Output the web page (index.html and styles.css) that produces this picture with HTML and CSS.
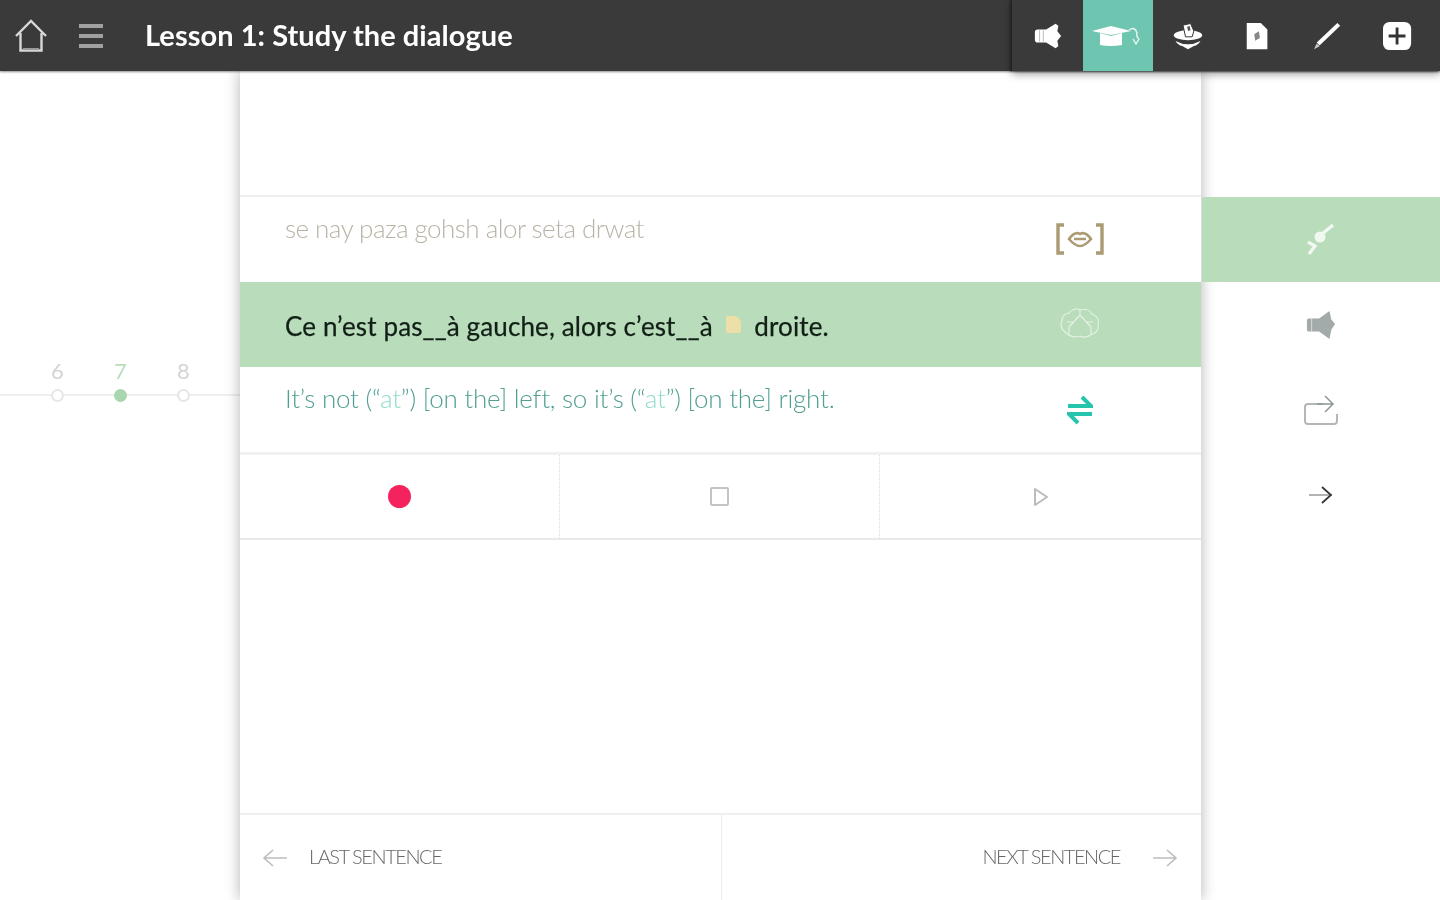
FILE: index.html
```html
<!DOCTYPE html>
<html lang="en">
<head>
<meta charset="utf-8">
<title>Lesson 1: Study the dialogue</title>
<link rel="stylesheet" href="styles.css">
</head>
<body>
<header class="topbar">
  <div class="topbar-left">
    <svg class="home-icon" viewBox="0 0 34 36"><path d="M2 18 L17 3 L32 18 M6.5 15 V32.5 H27.5 V15" fill="none" stroke="#d8d8d8" stroke-width="2.4"/><path d="M9 31 H25" stroke="#9a9a9a" stroke-width="2"/></svg>
    <div class="burger"><span></span><span></span><span></span></div>
    <h1 class="title">Lesson 1: Study the dialogue</h1>
  </div>
  <nav class="tools">
    <div class="tool"><svg class="ico" viewBox="0 0 32 32"><path d="M2 12 Q2 9 5 9 H14 L24 3 L27 5 L26 11 L30 16 L26 21 L27 27 L24 29 L14 23 H5 Q2 23 2 20 Z" fill="#fff"/><path d="M7 10 V22 M11 10 V22" stroke="#9a9a9a" stroke-width=".7"/></svg></div>
    <div class="tool tool-active"><svg class="ico-wide" viewBox="0 0 54 32"><path d="M1 11 L20 6 L40 11 L20 15 Z" fill="#fff"/><path d="M9 13 L20 16 L31 13 V25 Q20 27 9 25 Z" fill="#fff"/><path d="M38 10 Q44 6 46 13 Q45 17 48 19 L45 24 L42 19" fill="none" stroke="#eaf7f3" stroke-width="1.4"/></svg></div>
    <div class="tool"><svg class="ico" viewBox="0 0 36 32"><ellipse cx="18" cy="15" rx="17" ry="6" fill="#fff"/><path d="M12 3 L21 1 L25 10 L23 17 H15 Z" fill="#fff" stroke="#3a3a3a" stroke-width="1.2"/><path d="M17 5 L20 4 L21 9 L18 10 Z" fill="#555"/><path d="M3 22 Q18 30 33 22 Q30 27 25 28 L18 32 L11 28 Q6 27 3 22 Z" fill="#fff"/></svg></div>
    <div class="tool"><svg class="ico" viewBox="0 0 32 32"><path d="M4 2 H19 L26 9 V30 H4 Z" fill="#fff"/><path d="M12 14 L17 11 L18 18 L13 21 Z" fill="#888"/></svg></div>
    <div class="tool"><svg class="ico" viewBox="0 0 32 32"><path d="M26 2 L29 5 L7 26 L4 23 Z" fill="#fff"/><path d="M4 24 L7 27 L1 30 Z" fill="#ccc"/></svg></div>
    <div class="tool"><svg class="ico" viewBox="0 0 32 32"><rect x="0" y="1" width="30" height="30" rx="7" fill="#fff"/><path d="M15 7 V25 M6 16 H24" stroke="#333" stroke-width="3"/></svg></div>
  </nav>
</header>

<main class="stage">
  <aside class="timeline">
    <div class="steps">
      <div class="step">6</div>
      <div class="step step-current">7</div>
      <div class="step">8</div>
    </div>
    <div class="track">
      <div class="track-cell"><i class="dot"></i></div>
      <div class="track-cell"><i class="dot dot-current"></i></div>
      <div class="track-cell"><i class="dot"></i></div>
    </div>
  </aside>

  <section class="card">
    <div class="card-top"></div>
    <div class="row">
      <p class="line line-phon">se nay paza gohsh alor seta drwat</p>
      <div class="row-icon row-icon-phon"><svg class="lips" viewBox="0 0 50 34"><path d="M9 3 H3 V31 H9 M41 3 H47 V31 H41" fill="none" stroke="#ab9a72" stroke-width="3.4"/><path d="M14 17 Q20 9 25 12 Q30 9 36 17 Q30 24 25 24 Q20 24 14 17 Z M19 17 H31" fill="none" stroke="#ab9a72" stroke-width="2.6"/></svg></div>
    </div>
    <div class="row row-green">
      <p class="line line-main">Ce n’est pas__à gauche, alors c’est__à <span class="marker"></span> droite.</p>
      <div class="row-icon row-icon-brain"><svg class="brain" viewBox="0 0 42 32"><path d="M6 25 Q0 20 3 14 Q3 7 10 6 Q15 0 22 3 Q30 1 33 7 Q41 10 39 18 Q40 25 33 27 Q27 32 21 29 Q13 32 6 25 Z M21 8 L10 20 M21 8 L32 20 M21 8 V3 M10 20 V27 M32 20 V27 M15 15 H8 M27 15 H34" fill="none" stroke="#e4f2e4" stroke-width="1.2"/></svg></div>
    </div>
    <div class="row">
      <p class="line line-trans">It’s not (“<span class="lit">at</span>”) [on the] left, so it’s (“<span class="lit">at</span>”) [on the] right.</p>
      <div class="row-icon row-icon-trans"><svg class="swap" viewBox="0 0 26 30"><path d="M1 11 H24 L15 2" fill="none" stroke="#25c4ac" stroke-width="4"/><path d="M25 19 H2 L11 28" fill="none" stroke="#25c4ac" stroke-width="4"/></svg></div>
    </div>
    <div class="controls">
      <div class="control"><i class="rec"></i></div>
      <div class="control"><i class="stop"></i></div>
      <div class="control"><svg class="play" viewBox="0 0 16 20"><path d="M2 2 L14 10 L2 18 Z" fill="none" stroke="#bcbcbc" stroke-width="2" stroke-linejoin="round"/></svg></div>
    </div>
    <div class="card-space"></div>
    <footer class="pager">
      <div class="pager-cell">
        <svg class="arrow" viewBox="0 0 26 20"><path d="M25 10 H2 M11 2 L2 10 L11 18" fill="none" stroke="#bdbdbd" stroke-width="1.6"/></svg>
        <span class="pager-label">LAST SENTENCE</span>
      </div>
      <div class="pager-cell pager-next">
        <span class="pager-label">NEXT SENTENCE</span>
        <svg class="arrow" viewBox="0 0 26 20"><path d="M1 10 H24 M15 2 L24 10 L15 18" fill="none" stroke="#bdbdbd" stroke-width="1.6"/></svg>
      </div>
    </footer>
  </section>

  <aside class="side">
    <div class="side-top"></div>
    <div class="side-item side-active"><svg class="ico-sm" viewBox="0 0 28 32"><circle cx="13" cy="13" r="5.5" fill="#f1f8f1"/><path d="M15 10 L26 1" stroke="#f1f8f1" stroke-width="3.4"/><path d="M1 18 L8 22 L2 30" fill="none" stroke="#f1f8f1" stroke-width="3.4"/></svg></div>
    <div class="side-item"><svg class="ico-sm" viewBox="0 0 32 32"><path d="M1 11 Q1 9 3 9 H14 L25 1 L27 10 L31 15 L27 21 L25 31 L14 23 H3 Q1 23 1 21 Z" fill="#a3abaa"/><path d="M6 9 V23" stroke="#e6e8e8" stroke-width=".8"/></svg></div>
    <div class="side-item"><svg class="repeat" viewBox="0 0 36 32"><path d="M20 10 H5 Q2 10 2 13 V27 Q2 30 5 30 H31 Q34 30 34 27 V20" fill="none" stroke="#b3b8b7" stroke-width="2"/><path d="M22 2 L30 10 L22 18 M14 10 H30" fill="none" stroke="#8f9695" stroke-width="1.5"/></svg></div>
    <div class="side-item"><svg class="arrow-dark" viewBox="0 0 26 20"><path d="M1 10 H24" stroke="#9a9a9a" stroke-width="1.5"/><path d="M14 2 L23 10 L14 18" fill="none" stroke="#333" stroke-width="1.7"/></svg></div>
  </aside>
</main>
</body>
</html>
```
FILE: styles.css
```css
* { box-sizing: border-box; }
html, body { margin: 0; height: 100%; }
body {
  width: 1440px;
  height: 900px;
  overflow: hidden;
  background: #fff;
  font-family: "Lato", "Noto Sans", sans-serif;
  display: flex;
  flex-direction: column;
}
p, h1 { margin: 0; }
svg { filter: blur(.4px); }

.topbar {
  position: relative;
  z-index: 3;
  height: 71px;
  flex: none;
  background: #3a3a3a;
  display: flex;
  justify-content: space-between;
  box-shadow: 0 1px 2px rgba(0,0,0,.45);
}
.topbar-left { display: flex; align-items: center; padding-left: 14px; }
.home-icon { width: 34px; height: 36px; }
.burger {
  width: 24px;
  margin-left: 31px;
  display: flex;
  flex-direction: column;
  gap: 6px;
  filter: blur(.5px);
}
.burger span { height: 4px; background: #a0a0a0; }
.title {
  margin-left: 42px;
  padding-bottom: 2px;
  color: #fff;
  font-size: 29px;
  font-weight: 700;
  letter-spacing: .05px;
  filter: blur(.4px);
}
.tools {
  display: flex;
  padding-right: 7px;
  padding-left: 1px;
  box-shadow: -2px 0 2px #222, 0 3px 8px rgba(0,0,0,.4);
}
.tool {
  width: 70px;
  height: 71px;
  display: flex;
  align-items: center;
  justify-content: center;
}
.tool-active { background: #6fc6b0; }
.ico { width: 30px; height: 30px; }
.ico-wide { width: 54px; height: 32px; }

.stage {
  flex: 1;
  display: grid;
  grid-template-columns: 240px 961px 239px;
  min-height: 0;
}

.timeline { padding-top: 287px; }
.steps, .track { display: flex; padding-left: 26px; }
.step {
  width: 63px;
  text-align: center;
  font-size: 22px;
  line-height: 26px;
  color: #d4d4d4;
  filter: blur(.4px);
}
.step-current { color: #b9dcba; }
.track {
  margin-top: 4px;
  height: 14px;
  background: linear-gradient(#eeeeee, #eeeeee) center / 100% 2px no-repeat;
}
.track-cell { width: 63px; display: flex; justify-content: center; align-items: center; }
.dot {
  width: 13px;
  height: 13px;
  border-radius: 50%;
  border: 2px solid #e6e6e6;
  background: #fff;
}
.dot-current { background: #a9d6ae; border-color: #a9d6ae; }

.card {
  position: relative;
  z-index: 1;
  display: flex;
  flex-direction: column;
  background: #fff;
  box-shadow: 0 0 14px rgba(0,0,0,.3);
}
.card-top { height: 126px; border-bottom: 2px solid #eeeeee; flex: none; }
.row {
  height: 85px;
  flex: none;
  display: flex;
  justify-content: space-between;
  padding-left: 45px;
}
.row-green { background: #b9dcba; }
.line { font-size: 26px; line-height: 32px; white-space: nowrap; filter: blur(.4px); }
.line-phon { color: #b8b3a5; padding-top: 15px; font-weight: 300; letter-spacing: -.53px; }
.line-main { color: #121f17; padding-top: 28px; letter-spacing: .13px; -webkit-text-stroke: .25px #121f17; }
.line-trans { color: #4f9f92; padding-top: 15px; font-weight: 300; letter-spacing: -.25px; }
.lit { color: #8fdccb; }
.marker {
  display: inline-block;
  width: 15px;
  height: 17px;
  margin: 0 7px 0 6px;
  border-radius: 2px 7px 3px 2px;
  background: #ecdfa8;
  vertical-align: 3px;
  filter: blur(.5px);
}
.row-icon { width: 80px; margin-right: 81px; display: flex; justify-content: center; }
.row-icon-phon { padding-top: 25px; }
.row-icon-brain { padding-top: 25px; }
.row-icon-trans { padding-top: 28px; }
.lips { width: 50px; height: 34px; }
.brain { width: 42px; height: 32px; }
.swap { width: 26px; height: 30px; }

.controls {
  height: 88px;
  flex: none;
  display: grid;
  grid-template-columns: 319px 320px 322px;
  border-top: 3px solid #f1f1f1;
  border-bottom: 2px solid #e9e9e9;
}
.control {
  display: flex;
  align-items: center;
  justify-content: center;
  border-left: 1px dotted #dcdcdc;
}
.control:first-child { border-left: 0; }
.rec { width: 23px; height: 23px; border-radius: 50%; background: #f4225f; }
.stop { width: 19px; height: 19px; border: 2px solid #c4c4c4; border-radius: 2px; }
.play { width: 16px; height: 20px; }

.card-space { flex: 1; }
.pager {
  height: 87px;
  flex: none;
  display: grid;
  grid-template-columns: 481px 480px;
  border-top: 2px solid #efefef;
}
.pager-cell {
  display: flex;
  align-items: center;
  padding: 0 23px 0 22px;
  gap: 21px;
}
.pager-next { justify-content: flex-end; gap: 32px; border-left: 1px solid #ededed; }
.pager-label {
  padding-bottom: 3px;
  font-size: 20px;
  font-weight: 300;
  letter-spacing: -1.45px;
  color: #666;
  filter: blur(.4px);
}
.arrow { width: 26px; height: 20px; }

.side { position: relative; z-index: 2; display: flex; flex-direction: column; }
.side-top { height: 126px; flex: none; }
.side-item { height: 85px; flex: none; display: flex; align-items: center; justify-content: center; }
.side-active { background: #b9dcba; margin-left: 1px; }
.ico-sm { width: 30px; height: 32px; }
.repeat { width: 36px; height: 32px; }
.arrow-dark { width: 26px; height: 20px; }
```
